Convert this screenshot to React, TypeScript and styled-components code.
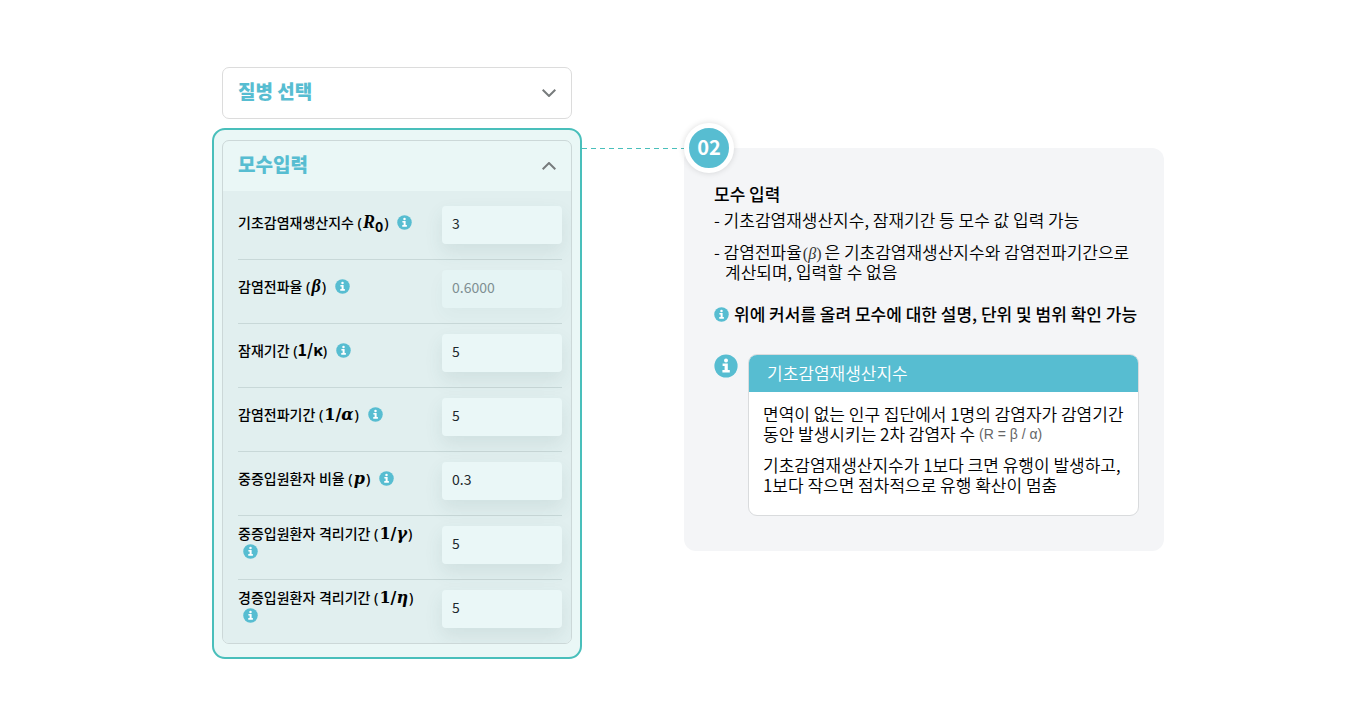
import React from 'react';
import styled, { createGlobalStyle } from 'styled-components';

const GlobalStyle = createGlobalStyle`
  * { box-sizing: border-box; }
  body {
    margin: 0;
    background: #ffffff;
    color: #000000;
    font-family: 'Noto Sans CJK KR', 'Noto Sans', sans-serif;
  }
  h2, h3, p { margin: 0; }
`;

const Page = styled.main`
  display: flex;
  align-items: flex-start;
  max-width: 964px;
  margin: 0 auto;
  padding: 67px 0 66px 12px;
`;

const Sidebar = styled.section`
  flex: 0 0 370px;
`;

const Card = styled.div`
  border: 1px solid #dcdcdc;
  border-radius: 7px;
  overflow: hidden;
`;

const ClosedCard = styled(Card)`
  margin: 0 10px 9px;
`;

const OpenCard = styled(Card)`
  border-color: #ccd8d8;
`;

const Highlight = styled.div`
  padding: 10px 8px 13px;
  border: 2px solid #49bfbb;
  border-radius: 13px;
  background: #eaf7f6;
`;

const AccordionButton = styled.button`
  display: flex;
  align-items: center;
  justify-content: space-between;
  width: 100%;
  height: 50px;
  padding: 0 15px;
  border: 0;
  background: transparent;
  color: #57bdd1;
  font: 900 19px/28px 'Noto Sans CJK KR', sans-serif;
  cursor: pointer;
`;

const AccordionTitle = styled.span`
  padding-bottom: 4px;
`;

const ParameterForm = styled.form`
  padding: 5px 9px 0 15px;
  background: #e1efef;
`;

const ParameterRow = styled.div`
  display: flex;
  align-items: center;
  justify-content: space-between;
  padding: 10px 0 15px;
  border-bottom: 1px solid #c8d8d8;

  &:last-child { border-bottom: 0; }
`;

const ParameterLabel = styled.label`
  width: 184px;
  margin: -4px 0;
  padding-bottom: 4px;
  font-family: 'Noto Sans', 'Noto Sans CJK KR', sans-serif;
  font-size: 14px;
  font-weight: 500;
  line-height: 18px;
`;

const Formula = styled.span<{ $wide?: boolean }>`
  margin: 0 1px;
  font-family: ${({ $wide }) => ($wide ? "'DejaVu Serif'" : "'Liberation Serif'")}, serif;
  font-size: ${({ $wide }) => ($wide ? '16px' : '18px')};
  font-weight: 700;
  line-height: 0;

  sub {
    font-family: 'Noto Sans CJK KR', sans-serif;
    font-size: 14px;
    font-weight: 700;
    line-height: 0;
    vertical-align: -4px;
  }
`;

const PlainFormula = styled.span`
  font-family: 'Noto Sans CJK KR', sans-serif;
  font-size: 16px;
  font-weight: 700;
  line-height: 0;
`;

const ValueInput = styled.input`
  width: 120px;
  height: 38px;
  padding: 0 10px 4px;
  border: 0;
  border-radius: 4px;
  background: #eaf7f7;
  box-shadow: 0 8px 18px rgba(60, 100, 100, 0.1);
  color: #1d282c;
  font: 400 14px/20px 'Noto Sans CJK KR', sans-serif;

  &:disabled {
    background: #e5f4f4;
    box-shadow: 0 8px 18px rgba(60, 100, 100, 0.04);
    color: #7f8f92;
  }
`;

const Connector = styled.div`
  flex: 1 0 102px;
  height: 1px;
  margin-top: 81px;
  background: repeating-linear-gradient(90deg, #49bfbb 0 5px, transparent 5px 9px);
`;

const Guide = styled.section`
  position: relative;
  flex: 0 0 480px;
  margin-top: 81px;
  padding: 36px 25px 35px 30px;
  border-radius: 12px;
  background: #f4f5f7;
`;

const StepBadge = styled.div`
  position: absolute;
  top: -25px;
  left: 0;
  display: flex;
  align-items: center;
  justify-content: center;
  width: 50px;
  height: 50px;
  padding-bottom: 2px;
  border: 5px solid #ffffff;
  border-radius: 50%;
  background: #57bdd1;
  box-shadow: 0 0 6px rgba(0, 0, 0, 0.14);
  color: #ffffff;
  font-size: 20px;
  font-weight: 700;
  line-height: 28px;
`;

const GuideTitle = styled.h2`
  font-size: 17px;
  font-weight: 500;
  line-height: 20px;
`;

const GuideItem = styled.p`
  margin-top: 6px;
  padding-left: 11px;
  text-indent: -11px;
  font-size: 17px;
  font-weight: 350;
  line-height: 20px;

  & + & { margin-top: 12px; }
`;

const InlineMath = styled.span`
  padding: 0 3px 0 1px;
  color: #333333;
  font: 400 16px/1 'Liberation Serif', serif;
`;

const HoverHint = styled.p`
  display: flex;
  align-items: center;
  gap: 5px;
  margin-top: 22px;
  font-size: 17px;
  font-weight: 500;
  line-height: 20px;
`;

const Example = styled.div`
  display: flex;
  align-items: flex-start;
  gap: 10px;
  margin-top: 30px;
`;

const Tooltip = styled.article`
  flex: 1;
  border: 1px solid #d9dbdd;
  border-radius: 9px;
  overflow: hidden;
  background: #ffffff;
`;

const TooltipTitle = styled.h3`
  padding: 8px 18px 9px;
  background: #57bdd1;
  color: #ffffff;
  font-size: 17px;
  font-weight: 350;
  line-height: 20px;
`;

const TooltipBody = styled.div`
  display: grid;
  gap: 11px;
  padding: 12px 14px 20px;
  font-size: 17px;
  font-weight: 350;
  line-height: 20px;
`;

const Equation = styled.span`
  color: #666666;
  font: 400 14px/1 'Liberation Sans', sans-serif;
  vertical-align: 2px;
`;

const InfoSvg = styled.svg<{ $inline?: boolean }>`
  flex: none;
  vertical-align: -2px;
  margin-left: ${({ $inline }) => ($inline ? '5px' : '0')};
`;

const InfoIcon = ({ size = 15, inline = false }: { size?: number; inline?: boolean }) => (
  <InfoSvg $inline={inline} width={size} height={size} viewBox="0 0 24 24" aria-hidden="true">
    <circle cx="12" cy="12" r="11.6" fill="#57bdd1" />
    <circle cx="12" cy="6.4" r="2" fill="#fff" />
    <path d="M8.6 9.6h5.2v6.5h2v2.5H8.4v-2.5h2.2v-4h-2z" fill="#fff" />
  </InfoSvg>
);

const Chevron = ({ up = false }: { up?: boolean }) => (
  <svg width="14" height="8" viewBox="0 0 14 8" fill="none" stroke="#777b7c" strokeWidth="2" aria-hidden="true">
    <path d={up ? 'M.7 7.2 7 1l6.3 6.2' : 'M.7.8 7 7 13.3.8'} />
  </svg>
);

const parameters = [
  { id: 'r0', name: '기초감염재생산지수', symbol: <Formula><i>R</i><sub>0</sub></Formula>, value: '3' },
  { id: 'beta', name: '감염전파율', symbol: <Formula><i>β</i></Formula>, value: '0.6000', disabled: true },
  { id: 'kappa', name: '잠재기간', symbol: <PlainFormula>1/κ</PlainFormula>, value: '5' },
  { id: 'alpha', name: '감염전파기간', symbol: <Formula $wide>1/<i>α</i></Formula>, value: '5' },
  { id: 'p', name: '중증입원환자 비율', symbol: <Formula $wide><i>p</i></Formula>, value: '0.3' },
  { id: 'gamma', name: '중증입원환자 격리기간', symbol: <Formula $wide>1/<i>γ</i></Formula>, value: '5' },
  { id: 'eta', name: '경증입원환자 격리기간', symbol: <Formula $wide>1/<i>η</i></Formula>, value: '5' },
];

export default function App() {
  return (
    <>
      <GlobalStyle />
      <Page>
        <Sidebar>
          <ClosedCard>
            <AccordionButton type="button" aria-expanded="false">
              <AccordionTitle>질병 선택</AccordionTitle>
              <Chevron />
            </AccordionButton>
          </ClosedCard>
          <Highlight>
            <OpenCard>
              <AccordionButton type="button" aria-expanded="true">
                <AccordionTitle>모수입력</AccordionTitle>
                <Chevron up />
              </AccordionButton>
              <ParameterForm>
                {parameters.map(({ id, name, symbol, value, disabled }) => (
                  <ParameterRow key={id}>
                    <ParameterLabel htmlFor={id}>
                      {name} ({symbol}) <InfoIcon inline />
                    </ParameterLabel>
                    <ValueInput id={id} type="text" defaultValue={value} disabled={disabled} />
                  </ParameterRow>
                ))}
              </ParameterForm>
            </OpenCard>
          </Highlight>
        </Sidebar>
        <Connector />
        <Guide>
          <StepBadge>02</StepBadge>
          <GuideTitle>모수 입력</GuideTitle>
          <GuideItem>- 기초감염재생산지수, 잠재기간 등 모수 값 입력 가능</GuideItem>
          <GuideItem>
            - 감염전파율<InlineMath>(<i>β</i>)</InlineMath>은 기초감염재생산지수와 감염전파기간으로 계산되며, 입력할 수 없음
          </GuideItem>
          <HoverHint>
            <InfoIcon />
            위에 커서를 올려 모수에 대한 설명, 단위 및 범위 확인 가능
          </HoverHint>
          <Example>
            <InfoIcon size={24} />
            <Tooltip>
              <TooltipTitle>기초감염재생산지수</TooltipTitle>
              <TooltipBody>
                <p>
                  면역이 없는 인구 집단에서 1명의 감염자가 감염기간 동안 발생시키는 2차 감염자 수{' '}
                  <Equation>(R = β / α)</Equation>
                </p>
                <p>기초감염재생산지수가 1보다 크면 유행이 발생하고, 1보다 작으면 점차적으로 유행 확산이 멈춤</p>
              </TooltipBody>
            </Tooltip>
          </Example>
        </Guide>
      </Page>
    </>
  );
}
